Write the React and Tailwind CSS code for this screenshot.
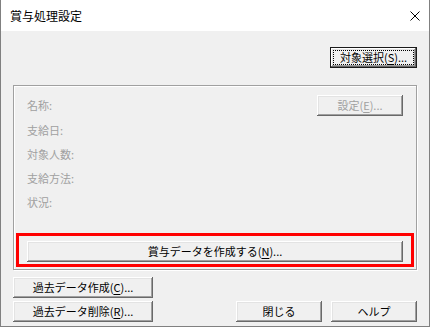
import React from "react";

const bevel =
  "shadow-[inset_-1px_-1px_0_#696969,inset_1px_1px_0_#ffffff,inset_-2px_-2px_0_#a0a0a0,inset_2px_2px_0_#e3e3e3]";

function Button({ children, className = "", disabled = false, isDefault = false }) {
  if (isDefault) {
    return (
      <div className={`relative h-[21px] border border-[#1a1a1a] bg-[#f0f0f0] ${className}`}>
        <div className={`relative flex h-full w-full items-center justify-center ${bevel}`}>
          <span className="absolute inset-[2px] border border-dotted border-black"></span>
          <span className="relative text-[11px] text-black">{children}</span>
        </div>
      </div>
    );
  }
  return (
    <div
      className={`flex h-[21px] items-center justify-center bg-[#f0f0f0] text-[11px] ${bevel} ${
        disabled ? "text-[#a0a0a0]" : "text-black"
      } ${className}`}
    >
      {children}
    </div>
  );
}

function Mn({ children }) {
  return <span className="underline underline-offset-2">{children}</span>;
}

const labels = ["支給日:", "対象人数:", "支給方法:", "状況:"];

export default function App() {
  return (
    <div className="flex h-[327px] w-[430px] flex-col border-r border-b border-l border-[#808080] bg-white font-['Noto_Sans_CJK_JP','Noto_Sans',sans-serif]">
      {/* title bar */}
      <div className="flex h-[31px] shrink-0 items-center justify-between bg-white pr-[9px] pl-[9px]">
        <span className="text-[12px] text-black">賞与処理設定</span>
        <svg width="10" height="10" viewBox="0 0 10 10" fill="none" stroke="#000" strokeWidth="1">
          <path d="M0.5 0.5L9.5 9.5M9.5 0.5L0.5 9.5" />
        </svg>
      </div>

      {/* body */}
      <div className="flex flex-1 flex-col bg-[#f0f0f0] px-[12px] pt-[16px] pb-[4px]">
        <div className="flex justify-end">
          <Button isDefault className="w-[87px]">
            対象選択(<Mn>S</Mn>)...
          </Button>
        </div>

        <div className="mt-[17px] flex h-[185px] flex-col border border-[#a0a0a0] px-[13px] pt-[9px] shadow-[inset_1px_1px_0_#ffffff,1px_1px_0_#ffffff]">
          <div className="flex h-[21px] items-center justify-between">
            <span className="text-[11px] text-[#a0a0a0]">名称:</span>
            <Button disabled className="w-[86px]">
              設定(<Mn>E</Mn>)...
            </Button>
          </div>
          <div className="mt-[2px] flex flex-col">
            {labels.map((l) => (
              <div key={l} className="h-[24px] text-[11px] leading-[24px] text-[#a0a0a0]">
                {l}
              </div>
            ))}
          </div>
          <div className="relative mt-[27px]">
            <Button className="w-full">
              賞与データを作成する(<Mn>N</Mn>)...
            </Button>
            <div className="pointer-events-none absolute -top-[8px] -right-[11px] -bottom-[5px] -left-[11px] border-[3px] border-[#ff0000]"></div>
          </div>
        </div>

        <div className="mt-[7px] flex">
          <Button className="w-[140px]">
            過去データ作成(<Mn>C</Mn>)...
          </Button>
        </div>
        <div className="mt-[3px] flex">
          <Button className="w-[140px]">
            過去データ削除(<Mn>R</Mn>)...
          </Button>
          <div className="ml-auto flex gap-[9px]">
            <Button className="w-[86px]">閉じる</Button>
            <Button className="w-[86px]">ヘルプ</Button>
          </div>
        </div>
      </div>
    </div>
  );
}
